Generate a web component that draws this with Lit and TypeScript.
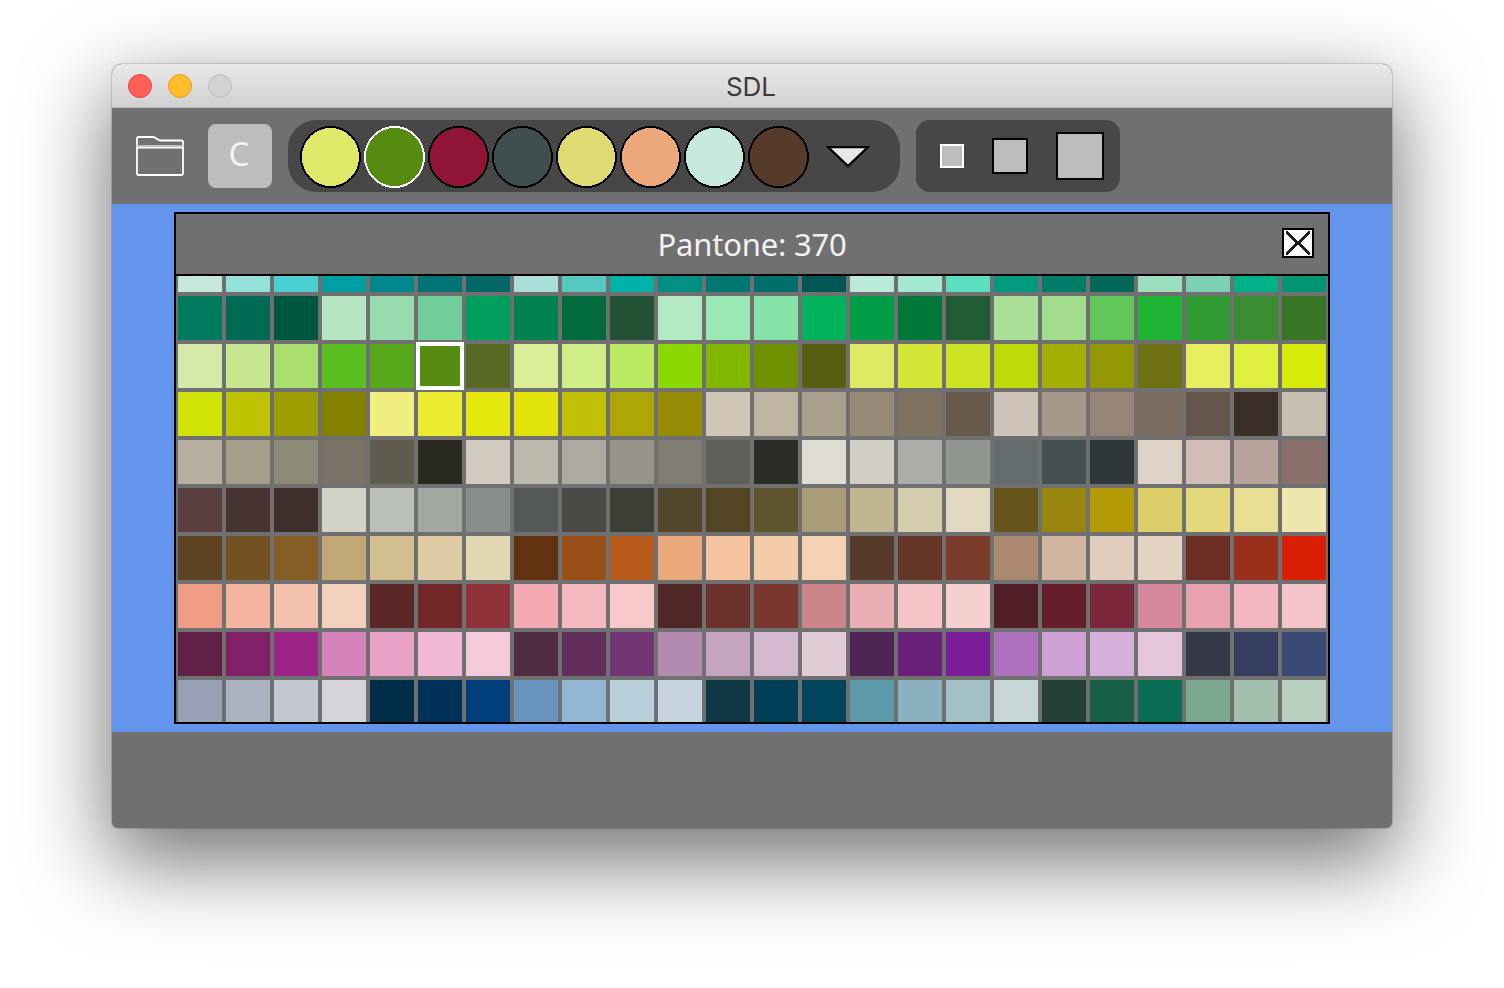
import { LitElement, css, html, svg } from 'lit'
import { customElement } from 'lit/decorators.js'

const palette = `
c7e8dd 94e0da 4ccfd2 00a0a5 00888c 007377 006666 a9dfd8 55c9c0 00b2aa 008f85 007872 006f6c 005653 b9ebd8 a2e8d0 5cdfbf 009b7e 007c68 006858 9cdcbf 7dd0b4 00b08a 009674
007a5e 006b55 00573f b5e5c1 97dbae 70ce9a 009f5e 008350 006a3e 235133 b4eac3 9ae8b3 86e3a8 00b25a 009c46 00783a 205b33 abe098 a2dd8e 60c75a 1fb436 319b33 3b8c33 397526
d6eaa7 c6e790 aade6e 5bbf21 58a81c 568b12 586a23 d9ee97 d0ef88 bbeb60 8ad900 82b700 709200 585f13 e0ea64 d5e636 cce322 bcdb08 a3ae05 949805 6f7012 e8ee5d e1f03f d8ea0a
cfe406 bdc300 9c9e02 838000 f1ee80 ebeb30 e6e90e e0e20a c2bf08 aea607 978a05 d2c7b7 c0b4a3 aba08d 978a78 807362 685a4a cfc2b7 a89889 978677 7b6c60 64564a 3c2f28 c7bfb0
b7afa0 a59e8b 8d8b78 7a7265 5f5c4e 2a2920 d2cbc0 bcb8ac aeaaa2 969389 807e73 5e5f58 2c2c27 dedcd3 d2cfc6 abaea8 919690 646b6d 444f50 2f3739 dfd2c7 d2bdb6 b9a49c 8b6f6a
5b3f40 483333 3f2f2c d1d2c6 bac0b8 a2a79f 898d8b 545858 494b47 3d3e36 54462d 534424 5f542b ab9c79 c1b692 d6cdae e2d9c0 66541a 988610 b59a08 dccd6b e3d77b e9df94 eee6ad
5c4423 725122 855e26 c1a875 d2bf90 dfcca5 e3d6b3 60320f 984f17 b95c1b e9a97b f5c3a0 f4ccaa f5d2b3 563b2a 643625 793c2a ab8870 d3b6a0 e0ccbc e4d3c2 6c2e22 98301b d92005
ef9d85 f3b4a0 f3c2ae f3d1bf 5a2626 722828 8f3138 f3aab1 f5bac0 f7c9c8 502626 6c312b 7a372d cc868a e9afb2 f4c4c6 f4d0ce 521e27 651e2a 7a273b d6889c e8a1af f2b6c0 f4c6cb
612147 802067 9c2286 d683bb e9a3c9 f2b8d6 f4cbd9 502c44 622e5c 703572 b38ab0 c5a4c2 d3b8d0 e1cbd4 4f2556 6a2079 7b1c99 ae71bd cea1d5 d6afdb e6c6dd 353846 353e5f 3b4a74
98a1b5 abb2c0 c3c7d0 d6d4d8 002e48 003259 003f7c 6793bd 93b7d3 b9cfdc c5d4df 0e3846 003f56 00455c 5f9aab 8aafbf a3c0c8 c6d7d6 234134 186047 086d54 7ca78f a4bfad b8cebe
`.trim().split(/\s+/)

const selectedIndex = 2 * 24 + 5
const recent = ['e0e96a', '568b12', '8f1438', '414e50', 'e0da72', 'eba97b', 'c7e8dd', '563b2a']

@customElement('app-root')
class AppRoot extends LitElement {
  renderSwatch(color: string, index: number) {
    const ring = index === 1 ? '#fff' : '#000'
    return html`<svg class="swatch" width="62" height="62" viewBox="0 0 62 62" shape-rendering="crispEdges">
      ${svg`<ellipse cx="30.5" cy="31" rx="29.5" ry="30" fill="#${color}" stroke="${ring}" stroke-width="2"></ellipse>`}
    </svg>`
  }

  render() {
    return html`
      <div class="window">
        <div class="titlebar">
          <div class="lights">
            <span class="light red"></span>
            <span class="light yellow"></span>
            <span class="light grey"></span>
          </div>
          <span class="title">SDL</span>
        </div>
        <div class="toolbar">
          <svg class="folder" width="48" height="40" viewBox="0 0 48 40" fill="none">
            <path d="M2.5 1H17.5L24 4.5H45.5Q47 4.5 47 6V37.5Q47 39 45.5 39H2.5Q1 39 1 37.5V2.5Q1 1 2.5 1Z" stroke="#fff" stroke-width="1.8"></path>
            <path d="M1 10H47" stroke="#c4c4c4" stroke-width="2"></path>
            <path d="M1 11.8H47" stroke="#fff" stroke-width="1.6"></path>
          </svg>
          <div class="cbutton">C</div>
          <div class="pill colors">
            <div class="swatches">${recent.map((c, i) => this.renderSwatch(c, i))}</div>
            <svg class="arrow" width="44" height="22" viewBox="0 0 44 22">
              <path d="M2 1H42L22 20Z" fill="#ebe6ea" stroke="#000" stroke-width="2.4"></path>
            </svg>
          </div>
          <div class="pill sizes">
            <span class="size small"></span>
            <span class="size medium"></span>
            <span class="size large"></span>
          </div>
        </div>
        <div class="canvas">
          <div class="panel">
            <div class="header">
              <span></span>
              <span class="heading">Pantone: 370</span>
              <div class="close">
                <svg width="28" height="26" viewBox="0 0 28 26" shape-rendering="crispEdges">
                  <path d="M2 2L26 24M26 2L2 24" stroke="#1c1c1c" stroke-width="2.8"></path>
                </svg>
              </div>
            </div>
            <div class="grid">
              ${palette.map(
                (c, i) =>
                  html`<div class=${i === selectedIndex ? 'cell selected' : 'cell'} style="background:#${c}"></div>`
              )}
            </div>
          </div>
        </div>
      </div>
    `
  }

  static styles = css`
    :host {
      display: block;
      height: 988px;
      box-sizing: border-box;
      padding: 64px 112px 0;
      background: #fff;
      overflow: hidden;
    }
    .window {
      width: 1280px;
      height: 764px;
      background: #707070;
      border-radius: 10px 10px 6px 6px;
      overflow: hidden;
      box-shadow: 0 0 0 1px rgba(0, 0, 0, 0.14), 0 30px 84px 4px rgba(0, 0, 0, 0.55);
    }
    .titlebar {
      height: 44px;
      box-sizing: border-box;
      display: grid;
      grid-template-columns: 1fr auto 1fr;
      align-items: center;
      background: linear-gradient(#e9e9e9, #d1d1d1);
      border-bottom: 1px solid #bdbdbd;
    }
    .lights {
      display: flex;
      gap: 16px;
      padding-left: 16px;
    }
    .light {
      width: 24px;
      height: 24px;
      box-sizing: border-box;
      border-radius: 50%;
      border: 1px solid;
    }
    .red {
      background: #ff5f57;
      border-color: #e2463f;
    }
    .yellow {
      background: #ffbd2e;
      border-color: #e1a116;
    }
    .grey {
      background: #d2d2d2;
      border-color: #bcbcbc;
    }
    .title {
      font: 26px 'Inter', 'Liberation Sans', sans-serif;
      color: #3a3a3a;
      margin: 2px 2px 0 0;
    }
    .toolbar {
      height: 96px;
      display: flex;
      align-items: center;
      padding-left: 24px;
    }
    .folder {
      margin-right: 24px;
    }
    .cbutton {
      width: 64px;
      height: 64px;
      box-sizing: border-box;
      padding: 0 2px 5px 0;
      margin-right: 16px;
      border-radius: 8px;
      background: #bdbdbd;
      color: #f4f4f4;
      font: 33px 'Noto Sans', sans-serif;
      display: flex;
      align-items: center;
      justify-content: center;
    }
    .pill {
      height: 72px;
      box-sizing: border-box;
      background: #474747;
      display: flex;
      align-items: center;
    }
    .colors {
      width: 612px;
      padding-left: 12px;
      border-radius: 28px;
      margin-right: 16px;
    }
    .swatches {
      display: flex;
      gap: 2px;
      margin: 2px 16px 0 0;
    }
    .swatch {
      display: block;
    }
    .arrow {
      margin-top: 2px;
    }
    .sizes {
      width: 204px;
      padding-left: 24px;
      border-radius: 14px;
    }
    .size {
      box-sizing: border-box;
      background: #bdbdbd;
      border: 2px solid #000;
    }
    .small {
      width: 24px;
      height: 24px;
      border-color: #fff;
      margin-right: 28px;
    }
    .medium {
      width: 36px;
      height: 36px;
      margin-right: 28px;
    }
    .large {
      width: 48px;
      height: 48px;
    }
    .canvas {
      height: 528px;
      box-sizing: border-box;
      padding: 8px 62px;
      background: #6495ed;
    }
    .panel {
      height: 512px;
      box-sizing: border-box;
      border: 2px solid #000;
      background: #707070;
    }
    .header {
      height: 60px;
      display: grid;
      grid-template-columns: 1fr auto 1fr;
      align-items: center;
      border-bottom: 2px solid #000;
    }
    .heading {
      font: 31px 'Noto Sans', sans-serif;
      letter-spacing: -0.2px;
      color: #f2f2f2;
    }
    .close {
      justify-self: end;
      width: 32px;
      height: 30px;
      box-sizing: border-box;
      margin: -2px 14px 0 0;
      background: #fff;
      border: 2px solid #000;
      display: flex;
    }
    .grid {
      display: grid;
      grid-template-columns: repeat(24, 44px);
      grid-template-rows: 16px repeat(8, 44px) 42px;
      gap: 4px;
      padding-left: 2px;
    }
    .selected {
      box-shadow: 0 0 0 2px #fff, inset 0 0 0 2px #fff;
    }
  `
}
